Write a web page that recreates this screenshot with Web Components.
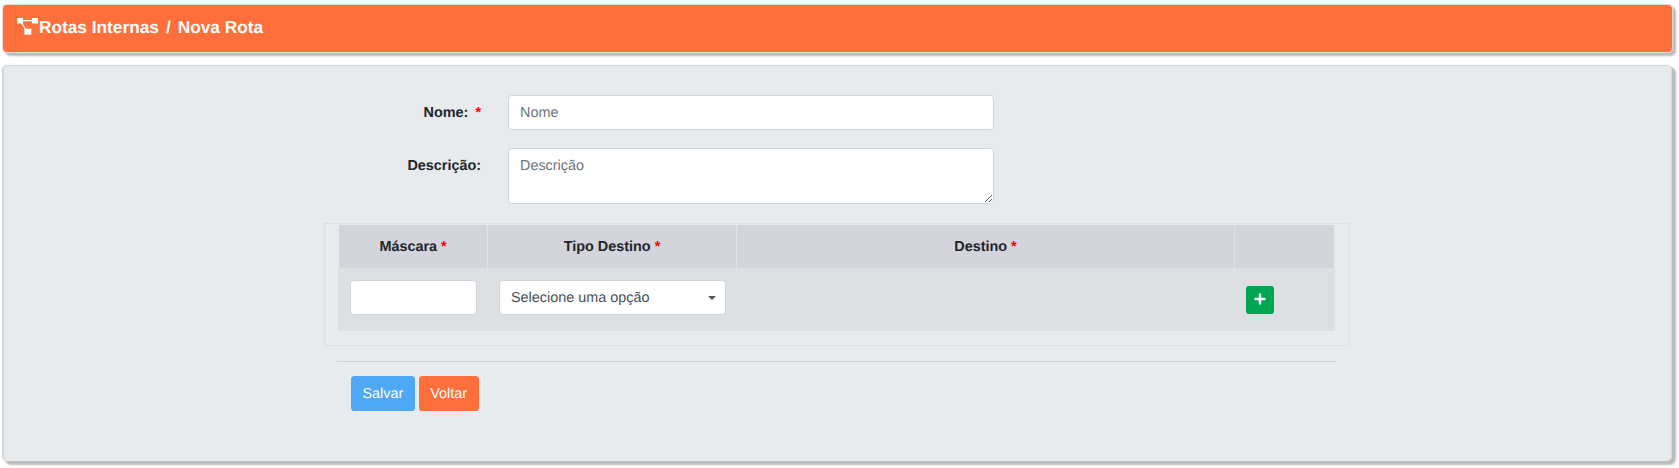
<!DOCTYPE html>
<html lang="pt">
<head>
<meta charset="utf-8">
<title>Nova Rota</title>
<style>
html, body { margin: 0; height: 100%; overflow: hidden; background: #fff; }
body { font: 14.4px/1.5 "Liberation Sans", Arial, sans-serif; color: #212529; padding: 5px 7px 0 3px; box-sizing: border-box; text-rendering: geometricPrecision; }
</style>
</head>
<body>
<page-header><span>Rotas Internas</span><span>Nova Rota</span></page-header>
<form-card>
    <form-row label="Nome:" required><text-field placeholder="Nome"></text-field></form-row>
    <form-row label="Descrição:"><text-field multiline placeholder="Descrição"></text-field></form-row>
    <route-table></route-table>
    <form-actions>
        <action-button color="#4fa8f5">Salvar</action-button>
        <action-button color="#ff6f3c">Voltar</action-button>
    </form-actions>
</form-card>

<script>
class PageHeader extends HTMLElement {
    constructor() {
        super();
        this.attachShadow({ mode: "open" });
    }

    connectedCallback() {
        const [first, second] = this.querySelectorAll("span");
        this.shadowRoot.innerHTML = `
        <style>
        :host {
            display: flex;
            align-items: center;
            height: 47px;
            box-sizing: border-box;
            padding: 0 0 1px 14px;
            background: #ff6f3c;
            color: #fff;
            border-radius: 4px;
            box-shadow: 0 0 0 1px #dedede, 3px 3px 2px 1px #bcbcbc;
            font-size: 17.28px;
            font-weight: bold;
            white-space: nowrap;
        }
        svg { width: 21px; height: 17px; margin: -3px 1px 0 0; flex: none; }
        .sep { margin: 0 7px; }
        </style>
        <svg viewBox="0 0 21 17" fill="#fff">
            <rect x="0" y="0" width="6" height="5.5"/>
            <rect x="15" y="0" width="6" height="5.5"/>
            <rect x="7.3" y="10.7" width="7" height="6"/>
            <path d="M5 2h11v1.2H5zM4 5l1.1-.6 4 6.5-1.1.6z"/>
        </svg>
        <span>${first.textContent}</span><span class="sep">/</span><span>${second.textContent}</span>
        `;
    }
}

class FormCard extends HTMLElement {
    constructor() {
        super();
        this.attachShadow({ mode: "open" }).innerHTML = `
        <style>
        :host {
            display: block;
            margin-top: 13px;
            height: 396px;
            box-sizing: border-box;
            padding-top: 29px;
            background: #e8ebee;
            border-radius: 5px;
            border: 1px solid #d8d8d8;
            border-bottom: 0;
            box-shadow: -1px 0 1px #d0d0d0, 3px 3px 2px 1px #bcbcbc;
        }
        </style>
        <slot></slot>
        `;
    }
}

class FormRow extends HTMLElement {
    constructor() {
        super();
        this.attachShadow({ mode: "open" });
    }

    connectedCallback() {
        const mark = this.hasAttribute("required") ? `<span class="req">*</span>` : "";
        this.shadowRoot.innerHTML = `
        <style>
        :host {
            display: grid;
            grid-template-columns: 477px 486px;
            column-gap: 27px;
            margin-bottom: 18px;
            font-weight: bold;
        }
        label { text-align: right; padding-top: 8px; }
        .req { color: #f00; margin-left: 7px; }
        </style>
        <label>${this.getAttribute("label")}${mark}</label>
        <slot></slot>
        `;
    }
}

class TextField extends HTMLElement {
    constructor() {
        super();
        this.attachShadow({ mode: "open" });
    }

    connectedCallback() {
        const placeholder = this.getAttribute("placeholder") || "";
        const control = this.hasAttribute("multiline")
            ? `<textarea placeholder="${placeholder}"></textarea>`
            : `<input type="text" placeholder="${placeholder}">`;
        this.shadowRoot.innerHTML = `
        <style>
        :host { display: block; }
        input, textarea {
            display: block;
            width: 100%;
            height: 35px;
            margin: 0;
            box-sizing: border-box;
            padding: 5px 11px;
            border: 1px solid #ced4da;
            border-radius: 3.6px;
            background: #fff;
            color: #495057;
            font: 400 14.4px/1.5 "Liberation Sans", Arial, sans-serif;
            text-rendering: geometricPrecision;
            outline: 0;
        }
        textarea { height: 56px; padding-top: 7px; resize: vertical; }
        ::placeholder { color: #6c757d; opacity: 1; }
        </style>
        ${control}
        `;
    }
}

class RouteTable extends HTMLElement {
    constructor() {
        super();
        this.attachShadow({ mode: "open" }).innerHTML = `
        <style>
        :host {
            display: block;
            width: 1026px;
            box-sizing: border-box;
            margin: 19px 0 0 320px;
            padding: 1px 14px 14px 13px;
            border: 1px solid #dcdfe3;
        }
        .grid {
            display: grid;
            grid-template-columns: 149px 249px 498px 101px;
            grid-template-rows: 43px 63px;
        }
        .th {
            display: flex;
            align-items: center;
            justify-content: center;
            padding-top: 3px;
            background: #d4d4dc;
            font-weight: bold;
            border-left: 1px solid #e0e2e6;
        }
        .th:first-child { border-left: 0; margin-left: 1px; }
        .th.last { margin-right: 1px; }
        .td {
            box-sizing: border-box;
            padding: 12px 10px 0 11px;
            background: #dde0e2;
            border-left: 1px solid #e0e3e6;
        }
        .td.first { border-left: 0; padding-left: 12px; }
        .req { color: #f00; margin-left: 4px; }
        .box {
            height: 35px;
            box-sizing: border-box;
            border: 1px solid #ced4da;
            border-radius: 3.6px;
            background: #fff;
        }
        input.box { display: block; width: 100%; margin: 0; outline: 0; }
        .select {
            display: flex;
            align-items: center;
            justify-content: space-between;
            padding: 2px 9px 0 11px;
            color: #495057;
        }
        .caret {
            width: 0;
            height: 0;
            margin-top: -2px;
            border-style: solid;
            border-width: 4px 4px 0;
            border-color: #555 transparent transparent;
        }
        .add {
            display: flex;
            align-items: center;
            justify-content: center;
            width: 28px;
            height: 28px;
            margin-top: 6px;
            padding: 0;
            border: 0;
            border-radius: 3px;
            background: #00a651;
        }
        .add svg { width: 12px; height: 12px; margin-top: -3px; }
        </style>
        <div class="grid">
            <div class="th">Máscara<span class="req">*</span></div>
            <div class="th">Tipo Destino<span class="req">*</span></div>
            <div class="th">Destino<span class="req">*</span></div>
            <div class="th last"></div>
            <div class="td first"><input class="box" type="text"></div>
            <div class="td"><div class="box select"><span>Selecione uma opção</span><i class="caret"></i></div></div>
            <div class="td"></div>
            <div class="td"><button class="add" type="button" aria-label="Adicionar"><svg viewBox="0 0 12 12" fill="#fff"><path d="M4.8.5h2.4v4.3h4.3v2.4H7.2v4.3H4.8V7.2H.5V4.8h4.3z"/></svg></button></div>
        </div>
        `;
    }
}

class FormActions extends HTMLElement {
    constructor() {
        super();
        this.attachShadow({ mode: "open" }).innerHTML = `
        <style>
        :host { display: block; margin-left: 333px; width: 999px; }
        hr { margin: 15px 0 14px; border: 0; border-top: 1px solid #ced1d5; }
        .buttons { display: flex; gap: 4px; padding-left: 14px; }
        </style>
        <hr>
        <div class="buttons"><slot></slot></div>
        `;
    }
}

class ActionButton extends HTMLElement {
    constructor() {
        super();
        this.attachShadow({ mode: "open" });
    }

    connectedCallback() {
        this.shadowRoot.innerHTML = `
        <style>
        :host {
            display: block;
            height: 35px;
            box-sizing: border-box;
            padding: 7px 11.5px 0;
            border-radius: 3.6px;
            background: ${this.getAttribute("color")};
            color: #fff;
            line-height: 22px;
        }
        </style>
        <slot></slot>
        `;
    }
}

customElements.define("page-header", PageHeader);
customElements.define("form-card", FormCard);
customElements.define("form-row", FormRow);
customElements.define("text-field", TextField);
customElements.define("route-table", RouteTable);
customElements.define("form-actions", FormActions);
customElements.define("action-button", ActionButton);
</script>
</body>
</html>
